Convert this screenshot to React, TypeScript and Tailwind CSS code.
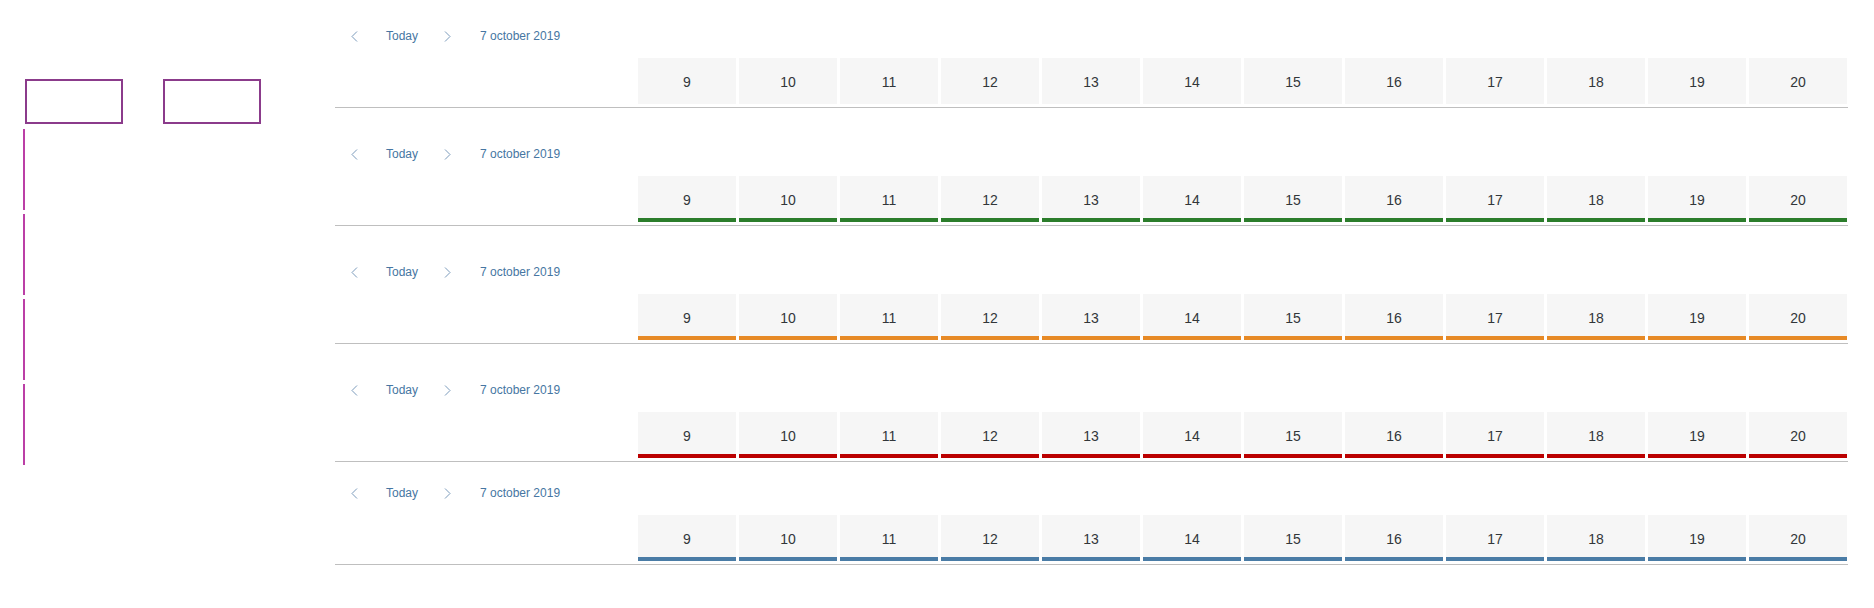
import React from "react";

const HOURS = [9, 10, 11, 12, 13, 14, 15, 16, 17, 18, 19, 20];

type Variant = "none" | "green" | "orange" | "red" | "blue";

const BAR: Record<Variant, string> = {
  none: "",
  green: "shadow-[inset_0_-4px_0_#2b7d2b]",
  orange: "shadow-[inset_0_-4px_0_#e78a26]",
  red: "shadow-[inset_0_-4px_0_#bb0000]",
  blue: "shadow-[inset_0_-4px_0_#4a7ca6]",
};

function Chevron({ dir }: { dir: "left" | "right" }) {
  return (
    <svg width="7" height="11" viewBox="0 0 7 11" fill="none">
      {dir === "left" ? (
        <path d="M6 0.5 L1 5.5 L6 10.5" stroke="#6b8fb3" strokeWidth="0.9" />
      ) : (
        <path d="M1 0.5 L6 5.5 L1 10.5" stroke="#6b8fb3" strokeWidth="0.9" />
      )}
    </svg>
  );
}

function Block({ variant, pt }: { variant: Variant; pt: string }) {
  return (
    <div className={`flex flex-col ${pt}`}>
      <div className="flex h-[43px] items-center pb-[1px] pl-[16px] text-[12px] text-[#4676a2]">
        <div className="flex w-[35px] items-center">
          <Chevron dir="left" />
        </div>
        <div className="w-[58px]">Today</div>
        <div className="flex w-[36px] items-center">
          <Chevron dir="right" />
        </div>
        <div>7 october 2019</div>
      </div>
      <div className="flex justify-end gap-[3px] pr-px">
        {HOURS.map((h) => (
          <div
            key={h}
            className={`flex h-[46px] w-[98px] items-center justify-center bg-[#f6f6f6] pt-[3px] text-[14px] text-[#32363a] ${BAR[variant]}`}
          >
            {h}
          </div>
        ))}
      </div>
      <div className="mt-[3px] h-px bg-[#bfbfbf]" />
    </div>
  );
}

export default function App() {
  return (
    <div
      className="flex h-[608px] w-[1874px] bg-white"
      style={{ fontFamily: '"Liberation Sans", Arial, sans-serif' }}
    >
      <div className="flex w-[335px] shrink-0 flex-col pl-[23px] pt-[79px]">
        <div className="ml-[2px] flex gap-[40px]">
          <div className="h-[45px] w-[98px] border-2 border-[#8b3b8b]" />
          <div className="h-[45px] w-[98px] border-2 border-[#8b3b8b]" />
        </div>
        <div className="mt-[5px] flex flex-col gap-[4px]">
          <div className="h-[81px] w-[2px] bg-[#bb3fa6]" />
          <div className="h-[81px] w-[2px] bg-[#bb3fa6]" />
          <div className="h-[81px] w-[2px] bg-[#bb3fa6]" />
          <div className="h-[81px] w-[2px] bg-[#bb3fa6]" />
        </div>
      </div>
      <div className="flex w-[1513px] flex-col">
        <Block variant="none" pt="pt-[15px]" />
        <Block variant="green" pt="pt-[25px]" />
        <Block variant="orange" pt="pt-[25px]" />
        <Block variant="red" pt="pt-[25px]" />
        <Block variant="blue" pt="pt-[10px]" />
      </div>
    </div>
  );
}
